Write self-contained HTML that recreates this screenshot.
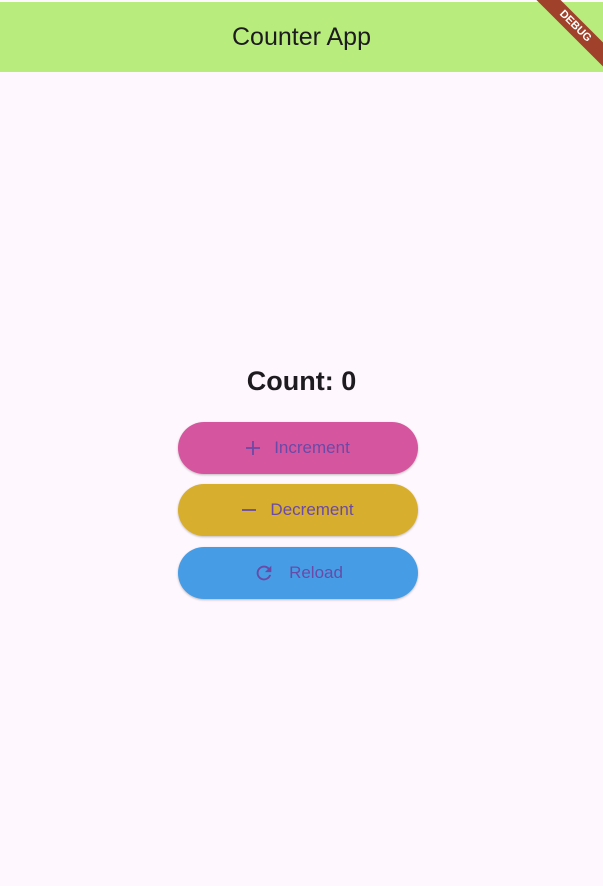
<!DOCTYPE html>
<html><head><style>
html,body{margin:0;padding:0;width:603px;height:886px;overflow:hidden;background:#fef7fd;font-family:"Liberation Sans",sans-serif;position:relative}
.bar{position:absolute;left:0;top:2px;width:603px;height:70px;background:#b8ec7c;text-align:center;line-height:70px;font-size:25px;color:#1d1b20}
.dbg{position:absolute;top:18px;right:-32px;width:120px;height:17px;background:#a0412c;transform:rotate(45deg);color:#fff;font-size:11px;font-weight:bold;text-align:center;line-height:17px}
.count{position:absolute;left:0;width:603px;top:366px;text-align:center;font-size:27px;font-weight:bold;color:#1d1b20}
.btn{position:absolute;left:178px;width:240px;height:52px;border-radius:26px;box-shadow:0 1px 2px rgba(0,0,0,.25);display:flex;align-items:center;justify-content:center;color:#6a4aa6;font-size:17px}
.btn svg{margin-right:14px}
</style></head><body>
<div class="bar">Counter App</div>
<div class="dbg">DEBUG</div>
<div class="count">Count: 0</div>
<div class="btn" style="top:422px;background:#d6559f"><svg width="14" height="14" viewBox="0 0 14 14"><path d="M7 0v14M0 7h14" stroke="#6a4aa6" stroke-width="1.8"/></svg>Increment</div>
<div class="btn" style="top:484px;background:#d8ae2e"><svg width="14" height="14" viewBox="0 0 14 14"><path d="M0 7h14" stroke="#6a4aa6" stroke-width="1.8"/></svg>Decrement</div>
<div class="btn" style="top:547px;background:#469de6"><svg width="22" height="22" viewBox="0 0 24 24"><path d="M17.65 6.35A7.96 7.96 0 0 0 12 4a8 8 0 1 0 7.73 10h-2.08A6 6 0 1 1 12 6c1.66 0 3.14.69 4.22 1.78L13 11h7V4l-2.35 2.35z" fill="#6a4aa6"/></svg>Reload</div>
</body></html>
